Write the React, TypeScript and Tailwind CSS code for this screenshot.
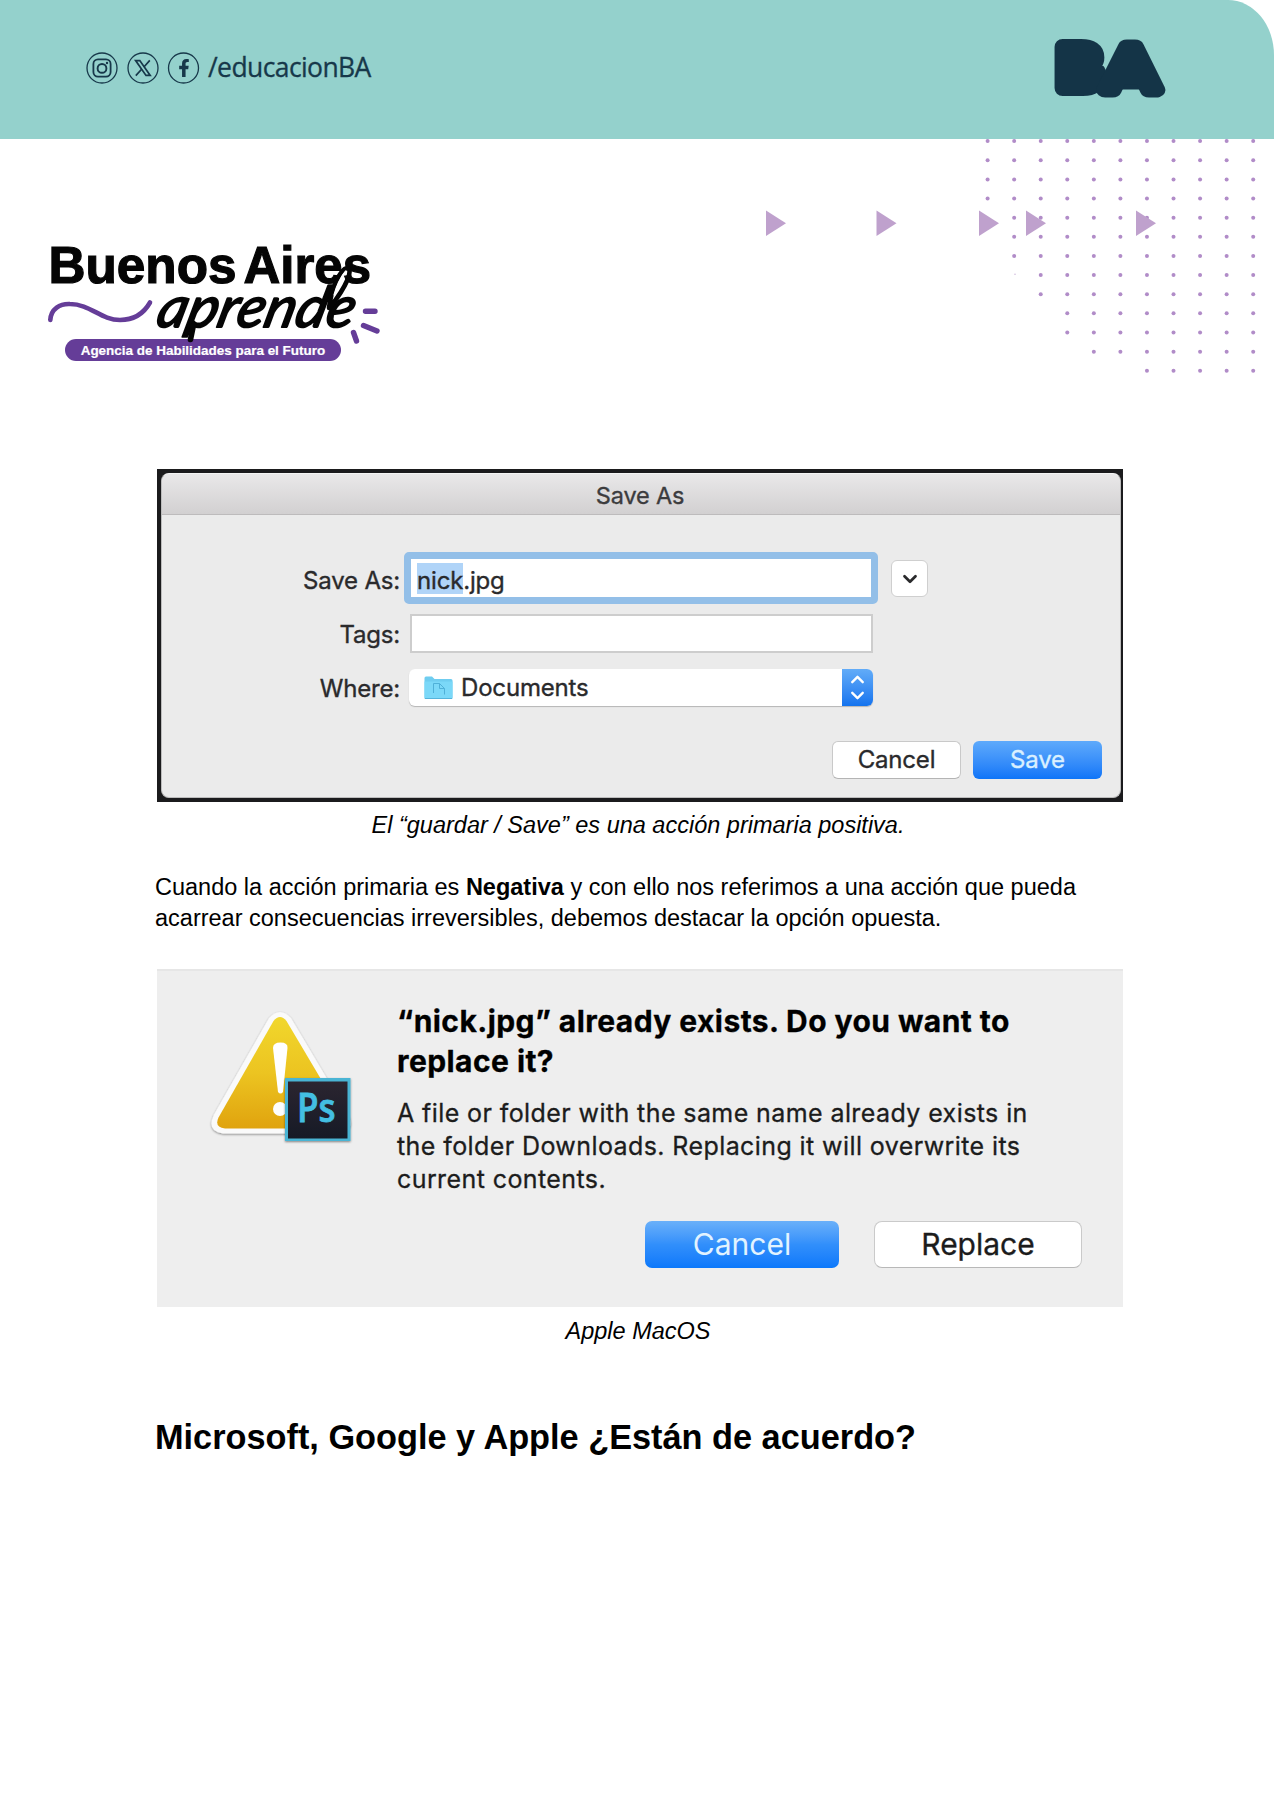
import { FaFacebookF } from "react-icons/fa";
import { ChevronDown, ChevronUp } from "lucide-react";

/* First visible column of the dot pattern, for each row */
const DOT_ROWS = [0, 0, 0, 0, 1, 1, 1, 2, 2, 3, 3, 4, 6];
const ARROWS = [766, 876.5, 979, 1026, 1136];

function SocialIcons() {
  return (
    <svg className="h-8 w-[114px] shrink-0" viewBox="0 0 114 32" fill="none" stroke="#17384a" strokeWidth="1.3">
      <circle cx="16" cy="16" r="15" />
      <circle cx="57" cy="16" r="15" />
      <circle cx="97.5" cy="16" r="15" />
      <rect x="7.4" y="7.4" width="17.2" height="17.2" rx="4.6" strokeWidth="1.8" />
      <circle cx="16" cy="16.4" r="4.4" strokeWidth="1.9" />
      <circle cx="21" cy="11" r="1.2" fill="#17384a" stroke="none" />
      <path d="M49.6 8.6h4.2l10.4 14.8h-4.2z" strokeWidth="1.7" />
      <path d="M63.8 8.4 57.9 15M55.6 17.2l-5.8 6.4" strokeWidth="1.7" />
    </svg>
  );
}

function GovernmentMark() {
  return (
    <svg
      className="h-[80px] w-[130px] overflow-visible"
      viewBox="1043 25 130 80"
      fill="#143447"
      stroke="#143447"
      strokeLinejoin="round"
      fontFamily="Liberation Sans"
    >
      <text x="1058.5" y="88" fontSize="60" fontWeight="700" strokeWidth="16" textLength="43" lengthAdjust="spacingAndGlyphs">
        B
      </text>
      <path d="M1131 50l-19 39.5h38z" stroke="none" />
      <text x="1105" y="89.5" fontSize="63.5" strokeWidth="15" textLength="51.5" lengthAdjust="spacingAndGlyphs">
        A
      </text>
    </svg>
  );
}

function Pattern() {
  return (
    <svg className="pointer-events-none absolute right-0 top-[139px] h-[241px] w-[534px]" viewBox="740 139 534 241">
      {DOT_ROWS.map((first, row) =>
        Array.from({ length: 11 - first }, (_, i) => (
          <circle key={`${row}-${i}`} cx={987.6 + (first + i) * 26.56} cy={141.1 + row * 19.14} r="2" fill="#b18cc8" />
        )),
      )}
      <circle cx="1015" cy="274.3" r="0.7" fill="#c9b0d8" />
      {ARROWS.map((x) => (
        <path key={x} d={`M${x} 210.5l20 12.7-20 12.7z`} fill="#bfa1cd" />
      ))}
    </svg>
  );
}

function ProgramLogo() {
  return (
    <svg className="block h-[140px] w-[360px] overflow-visible" viewBox="40 230 360 140" fill="none">
      <rect x="65" y="339" width="276" height="22" rx="11" fill="#653d98" />
      <text x="80.7" y="354.8" fill="#fff" fontFamily="Liberation Sans" fontWeight="700" fontSize="13.6" stroke="#fff" strokeWidth="0.2" textLength="244.5" lengthAdjust="spacingAndGlyphs">
        Agencia de Habilidades para el Futuro
      </text>
      <g fill="#050505" stroke="#050505" strokeWidth="1.2" fontFamily="Liberation Sans" fontWeight="700" fontSize="52.5">
        <text x="48.5" y="283.2" textLength="188" lengthAdjust="spacingAndGlyphs">Buenos</text>
        <text x="243.5" y="283.2" textLength="127.5" lengthAdjust="spacingAndGlyphs">Aires</text>
      </g>
      <path d="M50.3 320C51 309 60 303.5 70 304c20 0 31 16 50 16 14 0 24-7 30-17.5" stroke="#653d98" strokeWidth="4.6" strokeLinecap="round" />
      <text
        transform="translate(154.5 326.5) skewX(-14)"
        fill="#050505"
        stroke="#050505"
        strokeWidth="1.8"
        strokeLinejoin="round"
        fontFamily="Lato"
        fontStyle="italic"
        fontSize="57"
        textLength="197"
        lengthAdjust="spacingAndGlyphs"
      >
        aprende
      </text>
      <path d="M193.500 325l-3 14.500" stroke="#050505" strokeWidth="5.6" strokeLinecap="round" />
      <path d="M329 308C331 290 340 269 347 268c7 1-1 19-16 38" stroke="#050505" strokeWidth="4.6" strokeLinecap="round" />
      <path d="M345.500 271C340 278 336 287 334 295" stroke="#fff" strokeWidth="1.200" strokeLinecap="round" />
      <path d="M365.5 311.3H375M363.5 325.500l13.5 5.5M353.5 332.500l3 8.5" stroke="#653d98" strokeWidth="5.4" strokeLinecap="round" />
    </svg>
  );
}

function FolderIcon() {
  return (
    <svg className="h-6 w-[29px]" viewBox="0 0 29 24">
      <path d="M.5 2Q.5.5 2 .5h6l2.500 2.500H27q1.500 0 1.500 1.500v17q0 1-1 1h-26q-1 0-1-1z" fill="#6fcdf0" />
      <path d="M.5 5.500h28v16q0 1-1 1h-26q-1 0-1-1z" fill="#7bd8f8" />
      <path d="M.8 22.500h27.400" stroke="#55b4dc" />
      <path d="M9.500 17v-9.500h6l5 5v6M15.500 7.500v5h5" fill="none" stroke="#4fb0d8" strokeWidth="1" />
    </svg>
  );
}

function WarningIcon() {
  return (
    <svg className="h-[146px] w-[150px] shrink-0" viewBox="205 1003 150 146">
      <defs>
        <linearGradient id="gold" x1="0" y1="0" x2="0" y2="1">
          <stop offset="0" stopColor="#f1d72c" />
          <stop offset="0.5" stopColor="#ecc421" />
          <stop offset="1" stopColor="#e0a30e" />
        </linearGradient>
        <linearGradient id="panel" x1="0" y1="0" x2="0" y2="1">
          <stop offset="0" stopColor="#2b2530" />
          <stop offset="1" stopColor="#161a26" />
        </linearGradient>
        <filter id="shade" x="-20%" y="-20%" width="140%" height="140%">
          <feDropShadow dx="0" dy="1" stdDeviation="1.2" floodColor="#000" floodOpacity="0.45" />
        </filter>
      </defs>
      <path d="M269 1018q11-12 22 0l57 96q8 17-10 19.500H223q-17-2-9-19z" fill="#fafafa" filter="url(#shade)" />
      <path d="M273.5 1021q6.500-8 13 0l57.500 97q4 10-7 10.500H225q-11-1-6.500-11z" fill="url(#gold)" />
      <path d="M273 1048q0-5.500 7.500-5.500t7 5.500l-4.500 44q-2.500 3-5 0z" fill="#fff" />
      <circle cx="280" cy="1109" r="7" fill="#fdfdfd" />
      <rect x="285" y="1078" width="65.500" height="63" fill="#48b4d4" filter="url(#shade)" />
      <rect x="288" y="1081.500" width="59.500" height="57" fill="url(#panel)" />
      <text x="297" y="1122" fill="#43bfe2" stroke="#43bfe2" strokeWidth="0.8" fontFamily="Open Sans" fontWeight="600" fontSize="39" textLength="38.5" lengthAdjust="spacingAndGlyphs">
        Ps
      </text>
    </svg>
  );
}

function SaveDialog() {
  return (
    <div className="ml-[157px] h-[333px] w-[966px] bg-[#1b1b1d] pl-[4px] pt-[4px] font-['Inter',sans-serif] text-2xl tracking-[-0.18px] text-[#2a2a2c] [-webkit-text-stroke:0.35px]">
      <div className="h-[325px] w-[960px] overflow-hidden rounded-[8px] border border-[#bcbcbc] border-t-[#f4f4f4] bg-[#ebebeb]">
        <div className="flex h-[41px] items-center justify-center border-b border-[#bdbbbc] bg-gradient-to-b from-[#e9e8e9] to-[#d2d0d1] pr-[2px] pt-[3px] text-[23.5px] text-[#3c3c3e]">
          Save As
        </div>
        <div className="mt-[37px] flex h-[52px] items-center">
          <span className="w-[238px] pt-[5px] text-right">Save As:</span>
          <div className="ml-[4px] flex h-[52px] w-[474px] items-center rounded-[5px] border-[7px] border-[#93bfe8] bg-white pl-[6px]">
            <span className="h-[31px] bg-[#b0d4f8] pt-[3px] leading-[30px]">nick</span>
            <span className="h-[31px] pt-[3px] leading-[30px]">.jpg</span>
          </div>
          <button className="ml-[13px] mt-px flex h-[37px] w-[37px] items-center justify-center rounded-[6px] border border-[#cfcfcf] bg-white">
            <ChevronDown className="size-[22px]" strokeWidth={3} />
          </button>
        </div>
        <div className="mt-[10px] flex h-[39px] items-center">
          <span className="w-[238px] pt-[2px] text-right">Tags:</span>
          <div className="ml-[10px] h-[39px] w-[463px] border-2 border-[#cdcdcd] bg-white" />
        </div>
        <div className="mt-[16px] flex h-[37px] items-center">
          <span className="w-[238px] pt-[2px] text-right">Where:</span>
          <div className="ml-[9px] flex h-[37px] w-[464px] items-center overflow-hidden rounded-[6px] bg-white shadow-[0_1px_1px_#b5b5b5]">
            <span className="ml-[15px]">
              <FolderIcon />
            </span>
            <span className="ml-2 grow pt-px">Documents</span>
            <span className="flex h-full w-[31px] flex-col items-center justify-center bg-gradient-to-b from-[#62acf8] to-[#1273ee] text-white">
              <ChevronUp className="-mb-[2px] size-[21px]" strokeWidth={2.7} />
              <ChevronDown className="-mt-[3px] size-[21px]" strokeWidth={2.7} />
            </span>
          </div>
        </div>
        <div className="mr-[18px] mt-[35px] flex justify-end gap-[12px]">
          <button className="h-[38px] w-[129px] rounded-[6px] border border-[#c9c9c9] border-b-[#b4b4b4] bg-white">Cancel</button>
          <button className="h-[38px] w-[129px] rounded-[6px] bg-gradient-to-b from-[#5eaafb] to-[#0d75f8] text-[#d9f0ff]">Save</button>
        </div>
      </div>
    </div>
  );
}

function ReplaceDialog() {
  return (
    <div className="ml-[157px] mt-[35px] flex h-[338px] w-[966px] border-t-2 border-[#e6e6e6] bg-[#eeeeee] pl-[48px] font-['Inter',sans-serif] text-black">
      <div className="pt-[32px]">
        <WarningIcon />
      </div>
      <div className="ml-[42px] w-[684px] pt-[30px] [-webkit-text-stroke:0.3px]">
        <h2 className="text-[30px] font-bold leading-[40px] tracking-[0.43px]">
          “nick.jpg” already exists. Do you want to
          <br />
          replace it?
        </h2>
        <p className="mt-[16px] text-[25px] leading-[32.8px] tracking-[0.41px] text-[#1c1c1c]">
          A file or folder with the same name already exists in
          <br />
          the folder Downloads. Replacing it will overwrite its
          <br />
          current contents.
        </p>
        <div className="ml-px mt-[26px] flex justify-end gap-[35px] text-[30px]">
          <button className="h-[47px] w-[194px] rounded-[7px] bg-gradient-to-b from-[#6ab0f9] via-[#318ffb] to-[#0a78fb] text-[#e2f3ff] [-webkit-text-stroke:0px]">Cancel</button>
          <button className="-mr-px h-[47px] w-[208px] rounded-[8px] border border-[#cacaca] border-b-[#b8b8b8] bg-white text-[#1c1c1c]">Replace</button>
        </div>
      </div>
    </div>
  );
}

export default function App() {
  return (
    <main className="relative h-[1800px] w-[1274px] overflow-hidden bg-white font-['Liberation_Sans',Arial,sans-serif] text-[23.5px] text-black">
      <header className="flex h-[139px] justify-between rounded-tr-[46px_55px] bg-[#94d1cc] pl-[86px] pr-[101px]">
        <div className="relative mt-[51.5px] flex h-8 items-center">
          <SocialIcons />
          <FaFacebookF className="absolute left-[88.5px] top-[7px] size-[18px] text-[#17384a]" />
          <span className="-mt-[2px] ml-[8px] font-['Open_Sans',sans-serif] text-[26.5px] leading-[30px] tracking-[-0.6px] text-[#17384a] [-webkit-text-stroke:0.3px]">/educacionBA</span>
        </div>
        <div className="mt-[25px]">
          <GovernmentMark />
        </div>
      </header>
      <Pattern />
      <div className="ml-10 mt-[91px] h-[239px]">
        <ProgramLogo />
      </div>
      <SaveDialog />
      <p className="ml-[2px] mt-2 text-center italic leading-[30px]">El “guardar / Save” es una acción primaria positiva.</p>
      <p className="ml-[155px] mt-[32px] leading-[31px]">
        Cuando la acción primaria es <strong>Negativa</strong> y con ello nos referimos a una acción que pueda
        <br />
        acarrear consecuencias irreversibles, debemos destacar la opción opuesta.
      </p>
      <ReplaceDialog />
      <p className="ml-[2px] mt-[9px] text-center italic leading-[30px]">Apple MacOS</p>
      <h1 className="ml-[155px] mt-[71px] text-[34.3px] font-bold leading-10">Microsoft, Google y Apple ¿Están de acuerdo?</h1>
    </main>
  );
}
